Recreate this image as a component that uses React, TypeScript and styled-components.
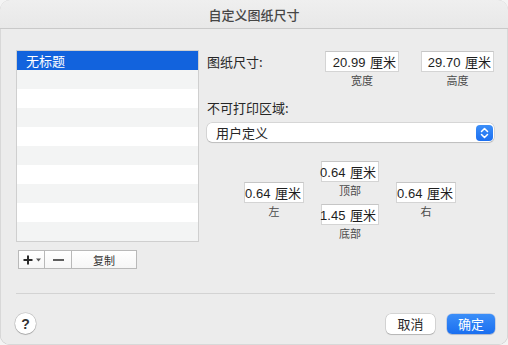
import styled, { createGlobalStyle } from "styled-components";

const GlobalStyle = createGlobalStyle`
	html, body {
		margin: 0;
		padding: 0;
		background: #f4f4f4;
	}
	body {
		font-family: "Liberation Sans", "Noto Sans CJK SC", sans-serif;
		font-size: 13px;
		color: #262626;
	}
`;

const Window = styled.div`
	width: 508px;
	height: 345px;
	box-sizing: border-box;
	background: #ececec;
	border-radius: 10px;
	overflow: hidden;
	display: flex;
	flex-direction: column;
	box-shadow: inset 0 0 0 0.5px #c4c4c4;
`;

const TitleBar = styled.div`
	height: 29px;
	box-sizing: border-box;
	border-bottom: 1px solid #c9c9c9;
	background: linear-gradient(#efefef, #e8e8e8);
	display: flex;
	align-items: center;
	justify-content: center;
	font-family: "Noto Sans CJK SC", sans-serif;
	font-size: 13px;
	font-weight: 500;
	color: #464646;
	padding-top: 1px;
`;

const Main = styled.div`
	display: flex;
	padding: 21px 0 0 16px;
`;

const LeftCol = styled.div`
	width: 183px;
	display: flex;
	flex-direction: column;
`;

const List = styled.div`
	border: 1px solid #cfcfcf;
	background: #fff;
	display: flex;
	flex-direction: column;
`;

const Row = styled.div<{ $selected?: boolean; $odd?: boolean }>`
	height: 19px;
	line-height: 19px;
	padding-left: 9px;
	font-family: "Noto Sans CJK SC", sans-serif;
	font-size: 13px;
	color: ${(p) => (p.$selected ? "#fff" : "#262626")};
	background: ${(p) => (p.$selected ? "#1263dd" : p.$odd ? "#f3f4f4" : "#ffffff")};
`;

const SegBar = styled.div`
	margin: 8px 0 0 2px;
	width: 119px;
	height: 19px;
	box-sizing: border-box;
	display: flex;
	border: 1px solid #b9b9b9;
	background: linear-gradient(#ffffff, #f6f6f6);
`;

const Seg = styled.div<{ $w: number; $last?: boolean }>`
	width: ${(p) => p.$w}px;
	box-sizing: border-box;
	border-right: ${(p) => (p.$last ? "none" : "1px solid #b9b9b9")};
	display: flex;
	align-items: center;
	justify-content: center;
	gap: 3px;
	font-family: "Noto Sans CJK SC", sans-serif;
	font-size: 11px;
	color: #333;
`;

const RightCol = styled.div`
	width: 287px;
	margin-left: 8px;
	padding-top: 1px;
	display: flex;
	flex-direction: column;
`;

const SizeRow = styled.div`
	display: flex;
	align-items: flex-start;
`;

const RowLabel = styled.div<{ $w?: number }>`
	width: ${(p) => (p.$w ? `${p.$w}px` : "auto")};
	line-height: 21px;
	font-family: "Noto Sans CJK SC", sans-serif;
	font-size: 13px;
	color: #262626;
`;

const FieldGroup = styled.div<{ $ml?: number }>`
	display: flex;
	flex-direction: column;
	align-items: center;
	margin-left: ${(p) => p.$ml ?? 0}px;
`;

const Field = styled.div<{ $w: number }>`
	width: ${(p) => p.$w}px;
	height: 21px;
	box-sizing: border-box;
	background: #fff;
	border: 1px solid #d4d4d4;
	border-top-color: #c6c6c6;
	display: flex;
	align-items: center;
	justify-content: flex-end;
	padding: 0 2px 0 2px;
	white-space: nowrap;
	word-spacing: 1px;
	font-family: "Liberation Sans", "Noto Sans CJK SC", sans-serif;
	font-size: 13px;
	color: #1e1e1e;
`;

const FieldCaption = styled.div`
	height: 14px;
	line-height: 14px;
	margin-top: 1px;
	font-family: "Noto Sans CJK SC", sans-serif;
	font-size: 11px;
	color: #4a4a4a;
`;

const SectionLabel = styled.div`
	margin-top: 13px;
	line-height: 16px;
	font-family: "Noto Sans CJK SC", sans-serif;
	font-size: 13px;
	color: #262626;
`;

const Popup = styled.div`
	margin-top: 7px;
	height: 19px;
	box-sizing: border-box;
	background: #fff;
	border-radius: 5px;
	box-shadow: 0 0 0 0.5px rgba(0, 0, 0, 0.18), 0 1px 1px rgba(0, 0, 0, 0.12);
	display: flex;
	align-items: center;
	justify-content: space-between;
	padding: 0 1px 0 9px;
	font-family: "Noto Sans CJK SC", sans-serif;
	font-size: 13px;
	color: #262626;
`;

const Stepper = styled.div`
	width: 17px;
	height: 16px;
	border-radius: 4px;
	background: linear-gradient(#3d8ff8, #1b6ff1);
	display: flex;
	align-items: center;
	justify-content: center;
`;

const MarginGrid = styled.div`
	margin: 19px 0 0 37px;
	display: grid;
	grid-template-columns: 60px 58px 60px;
	column-gap: 17px;
	align-items: start;
`;

const MarginCol = styled.div<{ $offset?: number }>`
	display: flex;
	flex-direction: column;
	align-items: center;
	margin-top: ${(p) => p.$offset ?? 0}px;
`;

const Separator = styled.div`
	margin: 24px 13px 0 16px;
	height: 1px;
	background: #d3d3d3;
`;

const Footer = styled.div`
	display: flex;
	align-items: center;
	padding: 19px 13px 0 15px;
`;

const HelpButton = styled.div`
	width: 21px;
	height: 21px;
	border-radius: 50%;
	background: #fff;
	box-shadow: 0 0 0 0.5px rgba(0, 0, 0, 0.2), 0 1px 1px rgba(0, 0, 0, 0.18);
	display: flex;
	align-items: center;
	justify-content: center;
	font-family: "Liberation Sans", sans-serif;
	font-size: 14px;
	font-weight: 700;
	color: #333;
`;

const Spacer = styled.div`
	flex: 1;
`;

const Button = styled.div<{ $primary?: boolean }>`
	width: ${(p) => (p.$primary ? 48 : 49)}px;
	height: 20px;
	margin-left: ${(p) => (p.$primary ? 12 : 0)}px;
	border-radius: 5px;
	display: flex;
	align-items: center;
	justify-content: center;
	font-family: "Noto Sans CJK SC", sans-serif;
	font-size: 13px;
	color: ${(p) => (p.$primary ? "#fff" : "#262626")};
	background: ${(p) => (p.$primary ? "linear-gradient(#3b8ef8, #1a6ff0)" : "#fff")};
	box-shadow: ${(p) =>
		p.$primary
			? "0 0 0 0.5px rgba(0, 60, 180, 0.3), 0 1px 1px rgba(0, 0, 0, 0.12)"
			: "0 0 0 0.5px rgba(0, 0, 0, 0.2), 0 1px 1px rgba(0, 0, 0, 0.15)"};
`;

const rows = Array.from({ length: 10 }, (_, i) => i);

export default function App() {
	return (
		<>
			<GlobalStyle />
			<Window>
				<TitleBar>自定义图纸尺寸</TitleBar>
				<Main>
					<LeftCol>
						<List>
							{rows.map((i) => (
								<Row key={i} $selected={i === 0} $odd={i % 2 === 1}>
									{i === 0 ? "无标题" : ""}
								</Row>
							))}
						</List>
						<SegBar>
							<Seg $w={26}>
								<svg width="10" height="10" viewBox="0 0 10 10">
									<path d="M5 0.5v9M0.5 5h9" stroke="#2a2a2a" strokeWidth="2" />
								</svg>
								<svg width="5" height="4" viewBox="0 0 5 4">
									<path d="M0 0.5h5L2.5 3.5z" fill="#555" />
								</svg>
							</Seg>
							<Seg $w={27}>
								<svg width="11" height="4" viewBox="0 0 11 4">
									<path d="M0 2h11" stroke="#2a2a2a" strokeWidth="1.6" />
								</svg>
							</Seg>
							<Seg $w={64} $last>
								复制
							</Seg>
						</SegBar>
					</LeftCol>
					<RightCol>
						<SizeRow>
							<RowLabel $w={118}>图纸尺寸:</RowLabel>
							<FieldGroup>
								<Field $w={74}>20.99 厘米</Field>
								<FieldCaption>宽度</FieldCaption>
							</FieldGroup>
							<FieldGroup $ml={22}>
								<Field $w={73}>29.70 厘米</Field>
								<FieldCaption>高度</FieldCaption>
							</FieldGroup>
						</SizeRow>
						<SectionLabel>不可打印区域:</SectionLabel>
						<Popup>
							用户定义
							<Stepper>
								<svg width="9" height="12" viewBox="0 0 9 12">
									<path
										d="M1.5 4.5L4.5 1.5L7.5 4.5M1.5 7.5L4.5 10.5L7.5 7.5"
										fill="none"
										stroke="#fff"
										strokeWidth="1.5"
										strokeLinecap="round"
										strokeLinejoin="round"
									/>
								</svg>
							</Stepper>
						</Popup>
						<MarginGrid>
							<MarginCol $offset={21}>
								<Field $w={60}>0.64 厘米</Field>
								<FieldCaption>左</FieldCaption>
							</MarginCol>
							<MarginCol>
								<Field $w={58}>0.64 厘米</Field>
								<FieldCaption>顶部</FieldCaption>
								<Field $w={58} style={{ marginTop: 7 }}>
									1.45 厘米
								</Field>
								<FieldCaption>底部</FieldCaption>
							</MarginCol>
							<MarginCol $offset={21}>
								<Field $w={60}>0.64 厘米</Field>
								<FieldCaption>右</FieldCaption>
							</MarginCol>
						</MarginGrid>
					</RightCol>
				</Main>
				<Separator />
				<Footer>
					<HelpButton>?</HelpButton>
					<Spacer />
					<Button>取消</Button>
					<Button $primary>确定</Button>
				</Footer>
			</Window>
		</>
	);
}
